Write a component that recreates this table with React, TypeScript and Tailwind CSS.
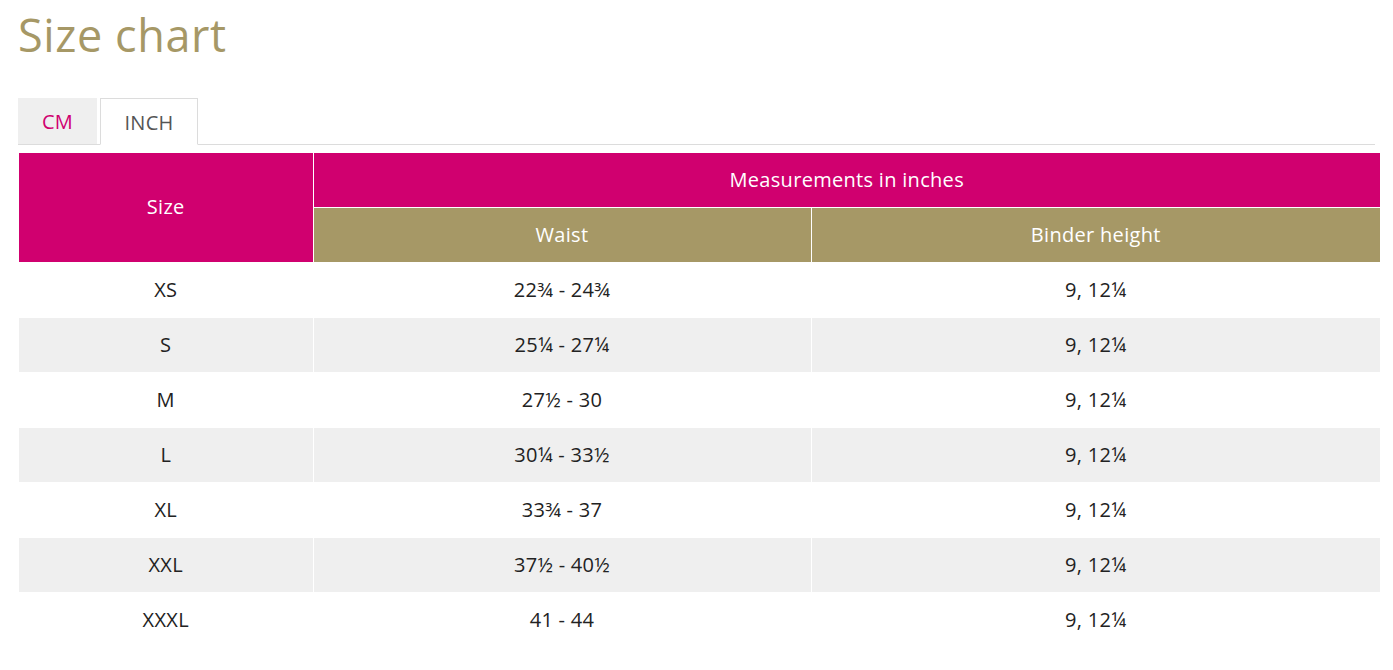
import { useState } from 'react';

type Row = { size: string; waist: string; binder: string };

const rowsInch: Row[] = [
  { size: 'XS', waist: '22¾ - 24¾', binder: '9, 12¼' },
  { size: 'S', waist: '25¼ - 27¼', binder: '9, 12¼' },
  { size: 'M', waist: '27½ - 30', binder: '9, 12¼' },
  { size: 'L', waist: '30¼ - 33½', binder: '9, 12¼' },
  { size: 'XL', waist: '33¾ - 37', binder: '9, 12¼' },
  { size: 'XXL', waist: '37½ - 40½', binder: '9, 12¼' },
  { size: 'XXXL', waist: '41 - 44', binder: '9, 12¼' },
];

export default function App() {
  const [tab, setTab] = useState<'cm' | 'inch'>('inch');

  return (
    <div className="min-h-screen bg-white px-[18px] pt-[7px] font-['Open_Sans','Lato',sans-serif] tracking-[0.3px] text-[#222]">
      <h1 className="text-[45px] font-normal leading-[56px] tracking-[0.6px] text-[#a69866]">Size chart</h1>

      <div className="mt-[35px] flex items-end border-b border-[#dcdcdc] pr-[12px]">
        <button
          onClick={() => setTab('cm')}
          className={
            tab === 'cm'
              ? 'mb-[-1px] h-[47px] w-[98px] border border-b-white border-[#dcdcdc] bg-white pt-[2px] text-[20px] text-[#555]'
              : 'mr-[3px] h-[46px] w-[79px] bg-[#efefef] pt-[2px] text-[20px] text-[#d0006f]'
          }
        >
          CM
        </button>
        <button
          onClick={() => setTab('inch')}
          className={
            tab === 'inch'
              ? 'mb-[-1px] h-[47px] w-[98px] border border-b-white border-[#dcdcdc] bg-white pt-[2px] text-[20px] text-[#555]'
              : 'ml-[3px] h-[46px] w-[79px] bg-[#efefef] pt-[2px] text-[20px] text-[#d0006f]'
          }
        >
          INCH
        </button>
      </div>

      <table className="mt-[8px] ml-px w-[1361px] table-fixed border-collapse text-center text-[20px]">
        <colgroup>
          <col className="w-[294px]" />
          <col className="w-[498px]" />
          <col className="w-[569px]" />
        </colgroup>
        <thead className="text-white">
          <tr className="h-[54px]">
            <th rowSpan={2} className="border border-white border-l-0 border-t-0 bg-[#d0006f] font-normal">
              Size
            </th>
            <th colSpan={2} className="border border-white border-r-0 border-t-0 bg-[#d0006f] font-normal">
              Measurements in {tab === 'inch' ? 'inches' : 'cm'}
            </th>
          </tr>
          <tr className="h-[55px]">
            <th className="border border-white bg-[#a69866] font-normal">Waist</th>
            <th className="border border-white border-r-0 bg-[#a69866] font-normal">Binder height</th>
          </tr>
        </thead>
        <tbody>
          {rowsInch.map((r, i) => (
            <tr key={r.size} className={i % 2 === 1 ? 'h-[55px] bg-[#efefef]' : 'h-[55px] bg-white'}>
              <td className="border border-white border-l-0">{r.size}</td>
              <td className="border border-white">{r.waist}</td>
              <td className="border border-white border-r-0">{r.binder}</td>
            </tr>
          ))}
        </tbody>
      </table>
    </div>
  );
}
